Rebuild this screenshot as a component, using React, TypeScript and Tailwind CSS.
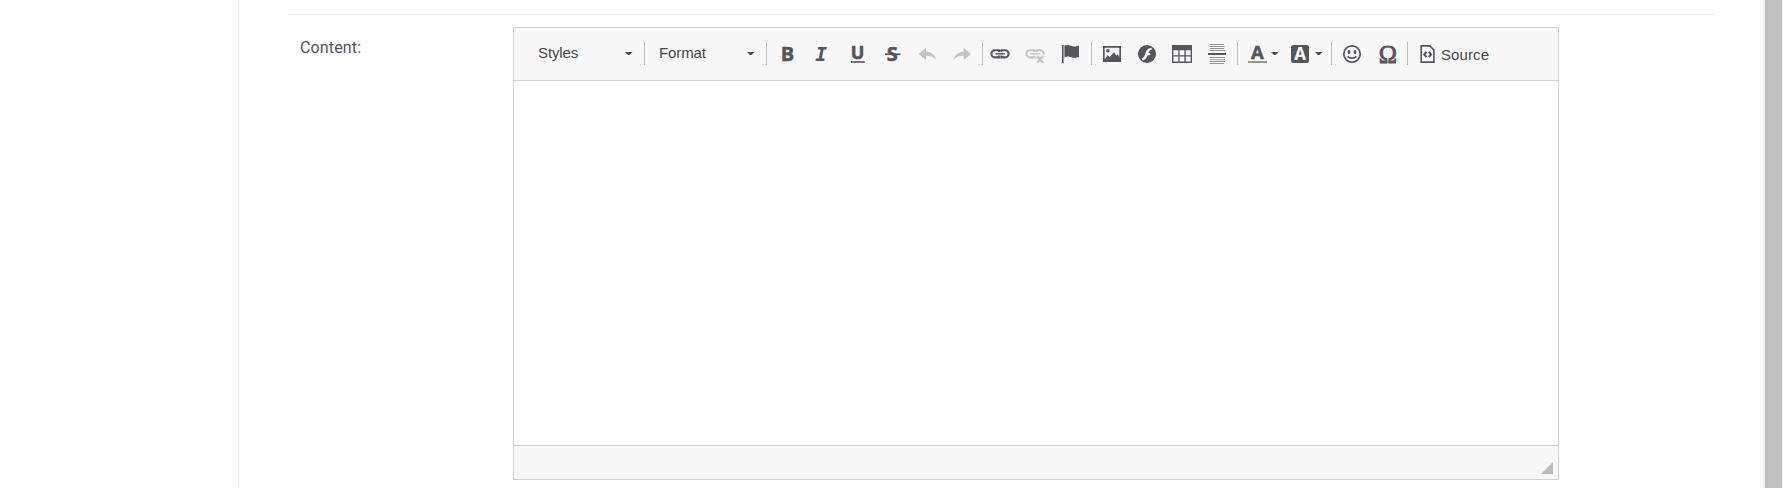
import type { ReactNode } from "react";

const Separator = ({ className }: { className: string }) => (
  <span className={`h-[23px] w-px shrink-0 bg-[#bcbcbc] ${className}`} />
);

const Tool = ({ label, children, muted = false }: { label: string; children: ReactNode; muted?: boolean }) => (
  <button aria-label={label} className={`h-5 w-[35px] shrink-0 ${muted ? "text-[#c4c4c4]" : "text-[#55565a]"}`}>
    <svg width="35" height="20" viewBox="0 0 35 20" fill="currentColor" className="block overflow-visible">
      {children}
    </svg>
  </button>
);

const Caret = ({ className }: { className: string }) => (
  <svg width="9" height="4" viewBox="0 0 9 4" fill="#484848" className={`shrink-0 ${className}`}>
    <path d="M1 0h7.500L5.500 3H4z" />
  </svg>
);

const Combo = ({ label, width }: { label: string; width: string }) => (
  <button className={`flex h-[23px] shrink-0 items-center justify-between text-[#474747] ${width}`}>
    <span className="-translate-y-px text-[15px] leading-[22px] tracking-[-0.1px]">{label}</span>
    <Caret className="" />
  </button>
);

const Letter = ({ x, y, size, family, children, fill = "currentColor", style = "normal", weight = 0.5, bold = true }: {
  x: number; y: number; size: number; family: string; children: string; fill?: string; style?: string; weight?: number; bold?: boolean;
}) => (
  <text x={x} y={y} fontSize={size} fontFamily={family} fontWeight={bold ? 700 : 400} fontStyle={style} fill={fill} stroke={fill} strokeWidth={weight} textAnchor="middle">
    {children}
  </text>
);

const Chain = () => (
  <g fill="none" stroke="currentColor">
    <path d="M16 8V6.2h-4a3.4 3.4 0 0 0 0 7.2h4v-1.8M18.4 8V6.2H22a3.4 3.4 0 0 1 0 7.2h-3.600v-1.800" strokeWidth="2.1" />
    <path d="M12.300 9.800h9.600" strokeWidth="1.500" />
  </g>
);

export default function App() {
  return (
    <div className="flex h-[488px] w-full overflow-hidden bg-white font-['Liberation_Sans',Arial,sans-serif]">
      <aside className="w-[239px] shrink-0 border-r border-[#ececec]" />
      <main className="flex-1 pl-[49px] pr-[49px] pt-[14px]">
        <div className="flex items-start border-t border-[#ececec] pt-3">
          <label className="w-[225px] shrink-0 pl-3 pt-[9px] font-['Roboto',sans-serif] text-[16px] leading-6 tracking-[0.15px] text-[#4d5660]">
            Content:
          </label>
          <section className="flex h-[453px] w-[1046px] shrink-0 flex-col border border-[#d1d1d1]">
            <div className="flex h-[53px] shrink-0 items-start border-b border-[#d1d1d1] bg-[#f8f8f8] pt-[14px] pl-6">
              <Combo label="Styles" width="w-[95px]" />
              <Separator className="ml-[11px] mr-[14px]" />
              <Combo label="Format" width="w-[96px]" />
              <Separator className="ml-[11px] mr-[3px]" />
              <div className="mt-[2px] flex">
                <Tool label="Bold"><Letter x={17.500} y={17.200} size={20} family="Open Sans">B</Letter></Tool>
                <Tool label="Italic"><Letter x={16} y={17.200} size={19.500} family="DejaVu Sans Mono" style="italic" weight={0.1}>I</Letter></Tool>
                <Tool label="Underline">
                  <Letter x={17.500} y={15.200} size={18} family="Open Sans" weight={0.600}>U</Letter>
                  <path d="M10.800 17.200h14v1.600H10.800z" />
                </Tool>
                <Tool label="Strikethrough">
                  <Letter x={17.300} y={17} size={20} family="Open Sans" weight={0.500}>S</Letter>
                  <path d="M10 9.400h15.500v1.700H10z" />
                </Tool>
                <Tool label="Undo" muted><path d="M8.700 10 16 3.800v3.600c5.400.2 9 3.300 10.500 9-2.700-3.300-5.600-4.600-10.500-4.600V16z" /></Tool>
                <Tool label="Redo" muted><path d="M26 10 18.700 3.800v3.600c-5.400.2-9 3.300-10.500 9 2.700-3.300 5.600-4.600 10.500-4.600V16z" /></Tool>
              </div>
              <Separator className="ml-[2px]" />
              <div className="mt-[2px] flex">
                <Tool label="Link"><Chain /></Tool>
                <Tool label="Unlink" muted>
                  <Chain />
                  <path d="m19 11 7 8m0-8-7 8" stroke="#f8f8f8" strokeWidth="4" />
                  <path d="m19.200 11.800 6 7m0-7-6 7" stroke="currentColor" strokeWidth="2.200" />
                </Tool>
                <Tool label="Anchor">
                  <path d="M9 1h1.600v18H9z" />
                  <path d="M11.400 1.600c2.700-1 4.700-.7 7.100.4 2.500.9 4.900.7 7.500-.5v11.500c-2.700 1-5.100 1-7.600.2-2.400-.9-4.600-.8-7 .2z" />
                </Tool>
              </div>
              <Separator className="ml-[3px] mr-[3px]" />
              <div className="mt-[2px] flex">
                <Tool label="Image">
                  <path fillRule="evenodd" d="M8 2h18v16H8zM9.700 3.700v11.500l3-4 2 2 4.300-5 2.400 3.500 1.300-1.500 1.600 2.500v-9z" />
                  <circle cx="12.800" cy="6.800" r="1.800" />
                </Tool>
                <Tool label="Flash">
                  <circle cx="17" cy="10" r="9" />
                  <path d="M21.700 3.800c-3.600.1-5.200 2.300-6.100 4.800-.9 3-1.500 5-3.500 5.600v2.100c3.500-.3 4.700-2.800 5.600-5.100h2.500V9.100h-1.800c.7-2 1.500-3.100 3.300-3.300z" fill="#f8f8f8" />
                </Tool>
                <Tool label="Table">
                  <path d="M7 1h20v18H7z" />
                  <path d="M8.400 6.300h4.900v5H8.400zM14.600 6.300h4.800v5h-4.800zM20.800 6.300h4.800v5h-4.800zM8.400 12.500h4.900v5H8.400zM14.600 12.500h4.800v5h-4.800zM20.800 12.500h4.800v5h-4.800z" fill="#f8f8f8" />
                </Tool>
                <Tool label="Horizontal line">
                  <path d="M8 9h18v2H8z" />
                  <path d="M10 0h14v1H10zM9.500 2h15v1h-15zM10 4h14v1H10zM9.500 6H25v1H9.500zM9.500 13H25v1H9.500zM9.500 17H25v1H9.500zM10 19h14v1H10z" opacity=".62" />
                  <path d="M9.500 15H25v1.300H9.500z" opacity=".4" />
                </Tool>
              </div>
              <Separator className="ml-[2px] mr-[3px]" />
              <div className="mt-[2px] flex items-start">
                <div className="flex w-[44px]">
                  <Tool label="Text color">
                    <Letter x={16.500} y={14.600} size={18.500} family="Open Sans" weight={0.500}>A</Letter>
                    <path d="M7 17h19v2H7z" fill="#9b938f" />
                  </Tool>
                  <Caret className="-ml-[6px] mt-2" />
                </div>
                <div className="flex w-[46px]">
                  <Tool label="Background color">
                    <rect x="6" y="1" width="18" height="18" rx="2.500" />
                    <Letter x={15} y={16} size={17} family="Open Sans" fill="#f8f8f8" weight={0.100}>A</Letter>
                  </Tool>
                  <Caret className="-ml-[6px] mt-2" />
                </div>
              </div>
              <Separator className="mr-[3px]" />
              <div className="mt-[2px] flex">
                <Tool label="Smiley">
                  <circle cx="17" cy="10" r="8.200" fill="none" stroke="currentColor" strokeWidth="1.700" />
                  <ellipse cx="14" cy="7.900" rx="1.400" ry="2" />
                  <ellipse cx="20" cy="7.900" rx="1.400" ry="2" />
                  <path d="M12.700 12.200c1.600 2.500 7 2.500 8.600 0" fill="none" stroke="currentColor" strokeWidth="1.600" />
                </Tool>
                <Tool label="Special character">
                  <Letter x={17.800} y={18.500} size={24.500} family="Liberation Serif" weight={0.900} bold={false}>Ω</Letter>
                </Tool>
              </div>
              <Separator className="ml-[2px] mr-[12px]" />
              <button className="mt-[2px] flex items-start text-[#474747]">
                <svg width="16" height="20" viewBox="0 0 16 20" fill="none" stroke="#55565a" className="mr-[5px]">
                  <path d="M1.200 1.900h8.600L13.900 6v12.100H1.200z" strokeWidth="1.600" />
                  <path d="M6.500 7.800 4.300 10.500l2.200 2.700M8.900 7.800l2.200 2.700-2.200 2.700" strokeWidth="2" />
                </svg>
                <span className="text-[15px] leading-[22px] tracking-[0.1px]">Source</span>
              </button>
            </div>
            <div className="flex-1 bg-white" />
            <div className="flex h-[34px] shrink-0 items-end justify-end border-t border-[#d1d1d1] bg-[#f8f8f8] pb-[5px] pr-[5px]">
              <svg width="12" height="12" viewBox="0 0 12 12"><path d="M12 0v12H0z" fill="#bcbcbc" /></svg>
            </div>
          </section>
        </div>
      </main>
      <div className="w-5 shrink-0 border-l-2 border-r border-[#f0f0f0] bg-[#c1c1c1]" />
    </div>
  );
}
